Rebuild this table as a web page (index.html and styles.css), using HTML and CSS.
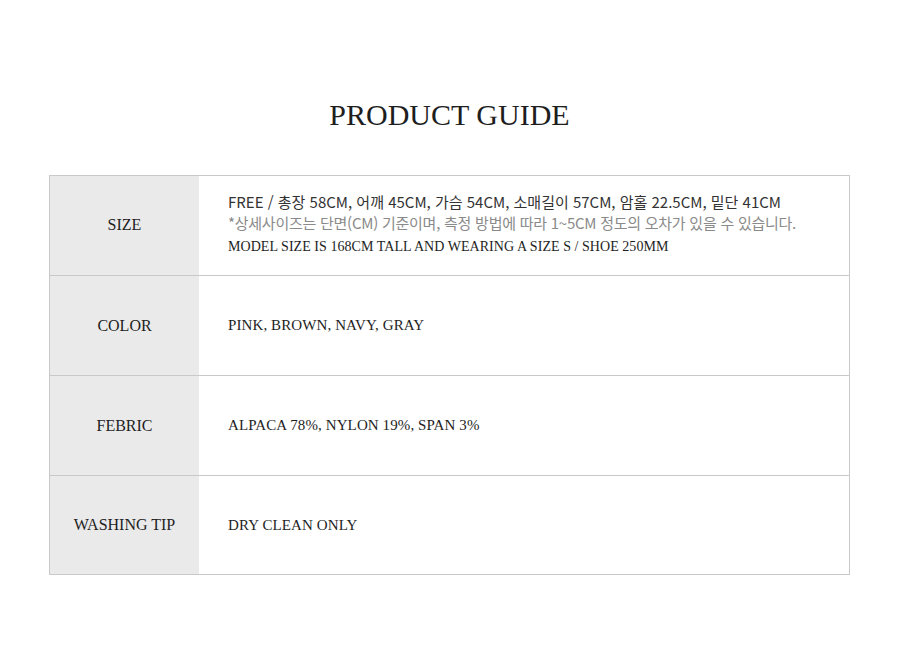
FILE: index.html
```html
<!DOCTYPE html>
<html lang="ko">
<head>
<meta charset="utf-8">
<title>Product Guide</title>
<link rel="stylesheet" href="styles.css">
</head>
<body>
<main class="guide">
  <h1 class="guide-title">PRODUCT GUIDE</h1>
  <table class="guide-table">
    <tr class="row">
      <th class="label label-size">SIZE</th>
      <td class="value value-size">
        <p class="kr kr-main">FREE / 총장 58CM, 어깨 45CM, 가슴 54CM, 소매길이 57CM, 암홀 22.5CM, 밑단 41CM</p>
        <p class="kr kr-note">*상세사이즈는 단면(CM) 기준이며, 측정 방법에 따라 1~5CM 정도의 오차가 있을 수 있습니다.</p>
        <p class="en en-model">MODEL SIZE IS 168CM TALL AND WEARING A SIZE S / SHOE 250MM</p>
      </td>
    </tr>
    <tr class="row">
      <th class="label">COLOR</th>
      <td class="value"><p class="en">PINK, BROWN, NAVY, GRAY</p></td>
    </tr>
    <tr class="row">
      <th class="label">FEBRIC</th>
      <td class="value"><p class="en">ALPACA 78%, NYLON 19%, SPAN 3%</p></td>
    </tr>
    <tr class="row row-last">
      <th class="label">WASHING TIP</th>
      <td class="value"><p class="en">DRY CLEAN ONLY</p></td>
    </tr>
  </table>
</main>
</body>
</html>
```
FILE: styles.css
```css
html, body {
  margin: 0;
  padding: 0;
  background: #ffffff;
}
body {
  font-family: "Liberation Serif", "Times New Roman", serif;
  color: #222;
}
.guide {
  width: 801px;
  margin: 0 0 0 49px;
  padding-top: 96px;
}
.guide-title {
  margin: 0 0 41px;
  text-align: center;
  font-weight: normal;
  font-size: 30px;
  line-height: 38px;
  color: #1e1e1e;
}
.guide-table {
  width: 801px;
  border-collapse: collapse;
  border: 1px solid #c9c9c9;
}
.row {
  height: 100px;
}
.row-last {
  height: 99px;
}
.row + .row {
  border-top: 1px solid #c9c9c9;
}
.label {
  width: 149px;
  padding: 0;
  background: #eaeaea;
  font-weight: normal;
  font-size: 16px;
  text-align: center;
  vertical-align: middle;
  color: #1e1e1e;
}
.label-size {
  padding-bottom: 2px;
}
.value {
  padding: 0 0 0 29px;
  vertical-align: middle;
  text-align: left;
}
.value-size {
  padding-bottom: 5px;
}
.value p {
  margin: 0;
}
.en {
  font-family: "Liberation Serif", "Times New Roman", serif;
  font-size: 15px;
  letter-spacing: 0.1px;
  color: #1e1e1e;
}
.kr {
  font-family: "Noto Sans CJK KR", "Noto Sans", sans-serif;
  font-size: 15px;
  line-height: 21px;
}
.kr-main {
  color: #333;
}
.kr-note {
  color: #8a8a8a;
  letter-spacing: -0.25px;
}
.en-model {
  margin-top: 6px !important;
  font-size: 14px;
  letter-spacing: 0.05px;
}
```
